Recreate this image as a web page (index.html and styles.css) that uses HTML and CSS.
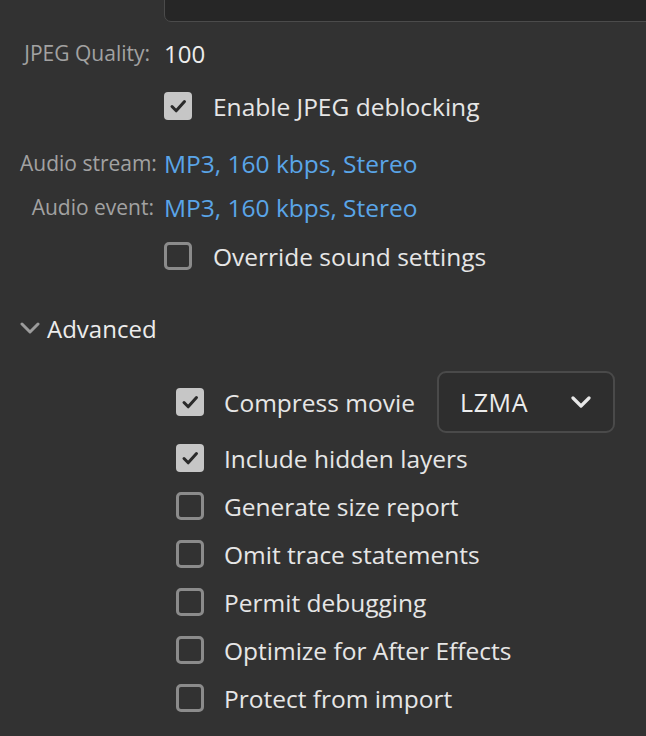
FILE: index.html
```html
<!DOCTYPE html>
<html>
<head>
<meta charset="utf-8">
<link rel="stylesheet" href="styles.css">
</head>
<body>
<div class="panel">
  <div class="row row-input">
    <span class="label label-top">Output file:</span>
    <div class="field"></div>
  </div>

  <div class="row row-jpeg">
    <span class="label">JPEG Quality:</span>
    <span class="value">100</span>
  </div>

  <div class="row row-enable">
    <span class="label"></span>
    <label class="check">
      <span class="box checked"><svg viewBox="0 0 28 28"><path d="M8 14.5 L12.2 18.8 L20.5 9.5"/></svg></span>
      <span class="text">Enable JPEG deblocking</span>
    </label>
  </div>

  <div class="row row-stream">
    <span class="label">Audio stream:</span>
    <span class="link">MP3, 160 kbps, Stereo</span>
  </div>

  <div class="row row-event">
    <span class="label">Audio event:</span>
    <span class="link">MP3, 160 kbps, Stereo</span>
  </div>

  <div class="row row-override">
    <span class="label"></span>
    <label class="check">
      <span class="box"></span>
      <span class="text">Override sound settings</span>
    </label>
  </div>

  <div class="section-head">
    <svg class="chev" viewBox="0 0 20 12"><path d="M2 2 L10 10 L18 2"/></svg>
    <span class="section-title">Advanced</span>
  </div>

  <div class="adv">
    <div class="adv-row compress">
      <label class="check">
        <span class="box checked"><svg viewBox="0 0 28 28"><path d="M8 14.5 L12.2 18.8 L20.5 9.5"/></svg></span>
        <span class="text text-compress">Compress movie</span>
      </label>
      <div class="select">
        <span>LZMA</span>
        <svg class="sel-chev" viewBox="0 0 20 12"><path d="M2 2 L10 10 L18 2"/></svg>
      </div>
    </div>
    <div class="adv-row">
      <label class="check">
        <span class="box checked"><svg viewBox="0 0 28 28"><path d="M8 14.5 L12.2 18.8 L20.5 9.5"/></svg></span>
        <span class="text">Include hidden layers</span>
      </label>
    </div>
    <div class="adv-row">
      <label class="check"><span class="box"></span><span class="text">Generate size report</span></label>
    </div>
    <div class="adv-row">
      <label class="check"><span class="box"></span><span class="text">Omit trace statements</span></label>
    </div>
    <div class="adv-row">
      <label class="check"><span class="box"></span><span class="text">Permit debugging</span></label>
    </div>
    <div class="adv-row">
      <label class="check"><span class="box"></span><span class="text">Optimize for After Effects</span></label>
    </div>
    <div class="adv-row">
      <label class="check"><span class="box"></span><span class="text">Protect from import</span></label>
    </div>
  </div>
</div>
</body>
</html>
```

FILE: styles.css
```css
html, body {
  margin: 0;
  padding: 0;
  background: #323232;
  overflow: hidden;
}
body {
  width: 646px;
  height: 736px;
  font-family: "Open Sans", "Liberation Sans", sans-serif;
  color: #e4e4e4;
}
.panel {
  display: flex;
  flex-direction: column;
  padding-left: 20px;
  margin-top: -28px;
}
.row {
  display: flex;
  align-items: center;
  height: 44px;
}
.label {
  width: 134px;
  flex: none;
  text-align: right;
  font-size: 21px;
  line-height: 28px;
  color: #a2a2a2;
  margin-right: 10px;
  white-space: nowrap;
}
.label-top {
  align-self: flex-start;
  margin-top: 1px;
}
.row-input {
  height: 50px;
}
.field {
  flex: 1;
  height: 48px;
  margin-right: -10px;
  background: #262626;
  border: 1px solid #4b4b4b;
  border-radius: 7px;
}
.row-jpeg { margin-top: 9px; }
.row-jpeg .label { width: 130px; margin-right: 14px; }
.row-enable { margin-top: 9px; }
.row-stream { margin-top: 13px; }
.row-event { margin-top: 0; }
.row-override { margin-top: 5px; }

.value {
  font-size: 24px;
  color: #ececec;
}
.link {
  font-size: 24.5px;
  color: #5aa5e8;
}
.check {
  display: flex;
  align-items: center;
}
.box {
  width: 28px;
  height: 28px;
  box-sizing: border-box;
  border: 3px solid #8b8b8b;
  border-radius: 5px;
  flex: none;
  display: flex;
}
.box.checked {
  background: #c6c6c6;
  border: none;
  border-radius: 4px;
}
.box svg {
  width: 28px;
  height: 28px;
}
.box svg path {
  fill: none;
  stroke: #2a2a2a;
  stroke-width: 3;
  stroke-linecap: round;
  stroke-linejoin: round;
}
.text {
  margin-left: 21px;
  font-size: 24.5px;
  color: #e6e6e6;
  white-space: nowrap;
}
.section-head {
  display: flex;
  align-items: center;
  height: 44px;
  margin-top: 28px;
}
.chev {
  width: 20px;
  height: 12px;
}
.chev path {
  fill: none;
  stroke: #9c9c9c;
  stroke-width: 3;
  stroke-linecap: round;
  stroke-linejoin: round;
}
.section-title {
  margin-left: 7px;
  font-size: 24px;
  color: #ececec;
}
.adv {
  display: flex;
  flex-direction: column;
  padding-left: 156px;
  margin-top: 21px;
}
.adv-row {
  display: flex;
  align-items: center;
  height: 48px;
}
.adv-row .text {
  margin-left: 20px;
}
.adv-row.compress {
  height: 62px;
  margin-bottom: 1px;
}
.text-compress {
  width: 213px;
}
.select {
  width: 178px;
  height: 62px;
  box-sizing: border-box;
  border: 2px solid #4a4a4a;
  border-radius: 9px;
  background: #2e2e2e;
  display: flex;
  align-items: center;
  justify-content: space-between;
  padding: 0 22px 0 21px;
  font-size: 25px;
  letter-spacing: 0.6px;
  color: #ececec;
}
.sel-chev {
  width: 20px;
  height: 12px;
}
.sel-chev path {
  fill: none;
  stroke: #e8e8e8;
  stroke-width: 3.2;
  stroke-linecap: round;
  stroke-linejoin: round;
}
```
